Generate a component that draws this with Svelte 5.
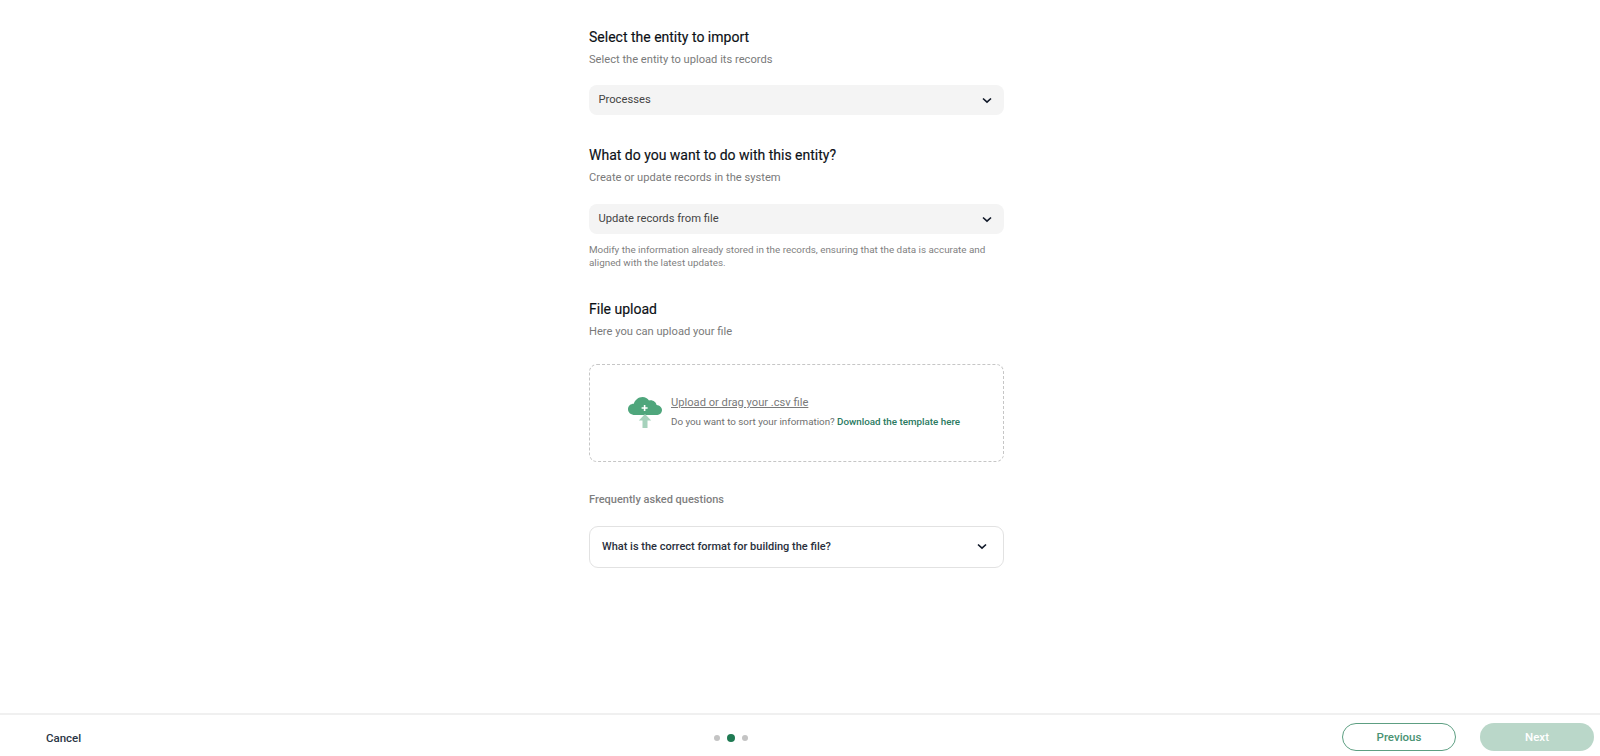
<script>
  const chevron = "M1 1.5 L5 5.2 L9 1.5";
</script>

<div class="page">
  <main class="main">
    <section class="block first">
      <h2>Select the entity to import</h2>
      <p class="sub">Select the entity to upload its records</p>
      <div class="select">
        <span>Processes</span>
        <svg width="10" height="7" viewBox="0 0 10 7"><path d={chevron} /></svg>
      </div>
    </section>

    <section class="block second">
      <h2>What do you want to do with this entity?</h2>
      <p class="sub">Create or update records in the system</p>
      <div class="select">
        <span>Update records from file</span>
        <svg width="10" height="7" viewBox="0 0 10 7"><path d={chevron} /></svg>
      </div>
      <p class="hint">Modify the information already stored in the records, ensuring that the data is accurate and aligned with the latest updates.</p>
    </section>

    <section class="block third">
      <h2>File upload</h2>
      <p class="sub">Here you can upload your file</p>
      <div class="drop">
        <svg class="cloud" width="34" height="31" viewBox="0 0 34 31">
          <path class="cloud-body" d="M7 18 C3 18 0 15.5 0 12.2 C0 9 2.6 6.8 5.8 6.8 C7 2.8 10.5 0 14.5 0 C17.2 0 19.6 1.3 21 3.4 C25 2.6 28 5 28.6 8 C31.8 8.4 34 10.4 34 13 C34 16 31.6 18 28 18 Z" />
          <path class="cloud-arrow" d="M17 17 L23.2 23.5 L19.5 23.5 L19.5 31 L14.5 31 L14.5 23.5 L10.8 23.5 Z" />
          <path class="cloud-plus" d="M15.8 8 H17.4 V10.2 H19.6 V11.8 H17.4 V14 H15.8 V11.8 H13.6 V10.2 H15.8 Z" />
        </svg>
        <div class="drop-text">
          <span class="upload">Upload or drag your .csv file</span>
          <span class="question">Do you want to sort your information? <b>Download the template here</b></span>
        </div>
      </div>
    </section>

    <p class="faq-title">Frequently asked questions</p>
    <div class="faq">
      <span>What is the correct format for building the file?</span>
      <svg width="10" height="7" viewBox="0 0 10 7"><path d={chevron} /></svg>
    </div>
  </main>

  <footer class="footer">
    <button class="cancel">Cancel</button>
    <div class="dots">
      <i class="dot"></i><i class="dot active"></i><i class="dot"></i>
    </div>
    <div class="actions">
      <button class="btn prev">Previous</button>
      <button class="btn next">Next</button>
    </div>
  </footer>
</div>

<style>
  :global(body) {
    margin: 0;
    background: #fff;
    font-family: Roboto, "Liberation Sans", sans-serif;
  }
  .page {
    height: 756px;
    display: flex;
    flex-direction: column;
    overflow: hidden;
  }
  .main {
    flex: 1;
    width: 415px;
    margin-left: 589px;
    padding-top: 29px;
    box-sizing: border-box;
  }
  h2 {
    margin: 0;
    font-size: 14px;
    line-height: 16px;
    font-weight: 400;
    color: #0c1016;
    -webkit-text-stroke: 0.15px #0c1016;
  }
  .sub {
    margin: 7px 0 0;
    font-size: 11.15px;
    line-height: 16px;
    color: #7a7a7a;
  }
  .select {
    margin-top: 17px;
    height: 30px;
    background: #f4f4f4;
    border-radius: 8px;
    display: flex;
    align-items: center;
    justify-content: space-between;
    padding: 0 12px 0 9.5px;
    font-size: 11.2px;
    color: #444;
  }
  .select span { position: relative; top: -0.5px; }
  svg path { fill: none; stroke: #101828; stroke-width: 1.6; }
  .second { margin-top: 32px; }
  .second .select { margin-top: 18px; }
  .hint {
    margin: 9px 0 0;
    font-size: 9.87px;
    line-height: 13px;
    color: #7f7f7f;
  }
  .third { margin-top: 32px; }
  .drop {
    margin-top: 24px;
    height: 98px;
    box-sizing: border-box;
    border: 1px dashed #c6c6c6;
    border-radius: 8px;
    display: flex;
    align-items: center;
    padding: 0 0 2px 38px;
    gap: 9px;
  }
  svg .cloud-body { fill: #4fa67c; stroke: none; }
  svg .cloud-arrow { fill: #a6d2bc; stroke: none; }
  svg .cloud-plus { fill: #fff; stroke: none; }
  .drop-text { display: flex; flex-direction: column; gap: 6px; }
  .upload {
    font-size: 11.17px;
    line-height: 14px;
    color: #7a7a7a;
    text-decoration: underline;
  }
  .question { font-size: 9.8px; line-height: 12px; color: #6f6f6f; }
  .question b { font-weight: 500; color: #2a7a5f; }
  .faq-title {
    margin: 31px 0 0;
    font-size: 11px;
    line-height: 14px;
    font-weight: 500;
    color: #7f7f7f;
  }
  .faq {
    margin-top: 19px;
    height: 42px;
    box-sizing: border-box;
    border: 1px solid #e2e2e2;
    border-radius: 9px;
    display: flex;
    align-items: center;
    justify-content: space-between;
    padding: 0 16px 2px 12px;
    font-size: 11px;
    font-weight: 500;
    color: #2a303c;
  }
  .footer {
    height: 43px;
    border-top: 2px solid #f0f0f0;
    box-sizing: border-box;
    display: flex;
    align-items: center;
    position: relative;
    padding: 3px 6px 0 46px;
    justify-content: space-between;
  }
  button { font-family: inherit; cursor: pointer; }
  .cancel {
    border: 0;
    background: none;
    padding: 0;
    margin-top: 2px;
    font-size: 11.5px;
    font-weight: 500;
    color: #2a3645;
  }
  .dots {
    position: absolute;
    left: 714px;
    top: 19px;
    display: flex;
    align-items: center;
    gap: 7px;
  }
  .dot { width: 6px; height: 6px; border-radius: 50%; background: #c4c4c4; display: block; }
  .dot.active { width: 8px; height: 8px; background: #1f7a53; }
  .actions { display: flex; gap: 24px; }
  .btn {
    width: 114px;
    height: 28px;
    border-radius: 14px;
    font-size: 11.5px;
    font-weight: 500;
    box-sizing: border-box;
  }
  .prev { background: #fff; border: 1px solid #5d9f82; color: #4a9373; }
  .next { background: #bad7c9; border: 0; color: #fff; }
</style>
